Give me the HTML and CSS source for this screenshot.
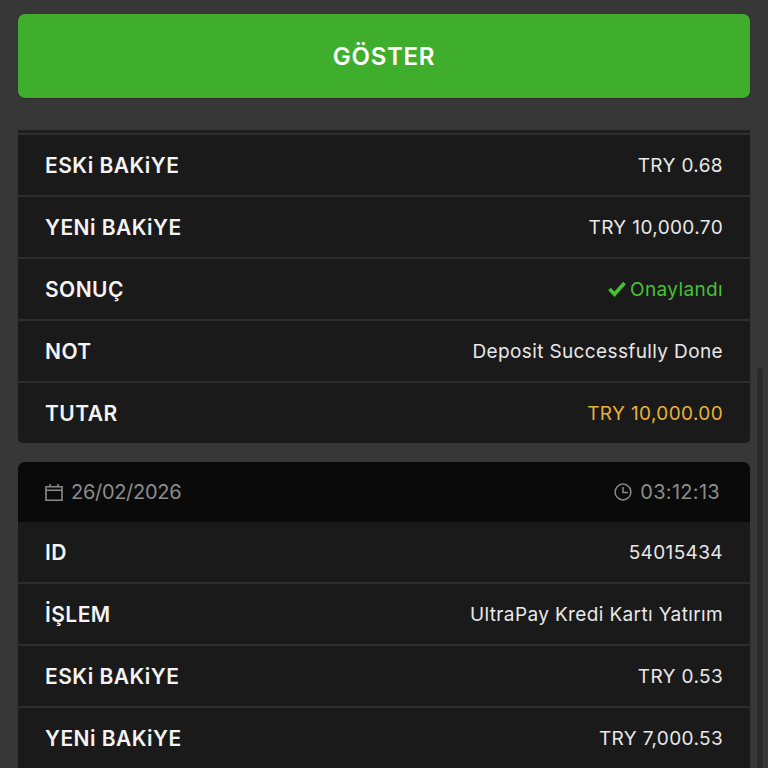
FILE: index.html
```html
<!DOCTYPE html>
<html lang="tr">
<head>
<meta charset="utf-8">
<title>Hesap Geçmişi</title>
<link rel="stylesheet" href="styles.css">
</head>
<body>
<div class="scrollbar"></div>
<main class="page">
  <button class="show-btn">GÖSTER</button>
  <section class="card card-first">
    <div class="row"><span class="label">ESKi BAKiYE</span><span class="value">TRY 0.68</span></div>
    <div class="row"><span class="label">YENi BAKiYE</span><span class="value">TRY 10,000.70</span></div>
    <div class="row"><span class="label">SONUÇ</span><span class="value ok"><svg class="check" viewBox="0 0 18 16" width="18" height="16"><path d="M1.5 8 6.5 13.3 16.5 2" fill="none" stroke="#45c234" stroke-width="3.6"/></svg>Onaylandı</span></div>
    <div class="row"><span class="label">NOT</span><span class="value">Deposit Successfully Done</span></div>
    <div class="row"><span class="label">TUTAR</span><span class="value amount">TRY 10,000.00</span></div>
  </section>
  <section class="card">
    <header class="card-head">
      <span class="stamp stamp-date"><svg viewBox="0 0 18 18" width="18" height="18"><path d="M1 3.8h16v13.4H1zM1 7.3h16M5 1v3.5M13 1v3.5" fill="none" stroke="#8a8a8a" stroke-width="1.6"/></svg>26/02/2026</span>
      <span class="stamp stamp-time"><svg viewBox="0 0 18 18" width="18" height="18"><circle cx="9" cy="9" r="7.9" fill="none" stroke="#8a8a8a" stroke-width="1.5"/><path d="M9 4V9.5H14" fill="none" stroke="#8a8a8a" stroke-width="1.5"/></svg>03:12:13</span>
    </header>
    <div class="row"><span class="label">ID</span><span class="value">54015434</span></div>
    <div class="row"><span class="label">İŞLEM</span><span class="value">UltraPay Kredi Kartı Yatırım</span></div>
    <div class="row"><span class="label">ESKi BAKiYE</span><span class="value">TRY 0.53</span></div>
    <div class="row"><span class="label">YENi BAKiYE</span><span class="value">TRY 7,000.53</span></div>
  </section>
</main>
</body>
</html>
```

FILE: styles.css
```css
* { box-sizing: border-box; }
html, body { margin: 0; height: 768px; overflow: hidden; background: #373737; }
body { font-family: Inter, "Liberation Sans", sans-serif; color: #f2f2f2; position: relative; }
.page { padding: 14px 18px 0; display: flex; flex-direction: column; }
.show-btn {
  display: block; width: 100%; height: 84px; border: 0; border-radius: 7px;
  background: #3eae2c; color: #fff; font: 600 24px Inter, "Liberation Sans", sans-serif;
  letter-spacing: .7px; box-shadow: 0 1px 1px rgba(0,0,0,.25);
}
.card { border-radius: 5px; overflow: hidden; background: #2f2f2f; }
.card-first { margin-top: 32px; border-radius: 0 0 5px 5px; border-top: 3px solid #1f1f1f; padding-top: 2px; height: 313px; }
.card + .card { margin-top: 19px; border-radius: 7px 7px 0 0; }
.row {
  height: 62px; padding: 0 27px; display: flex; align-items: center; justify-content: space-between;
  background: #1a1a1a; border-bottom: 2px solid #2e2e2e;
}
.card-first .row:last-child { border-bottom: 0; height: 60px; }
.label { font-size: 21px; font-weight: 600; color: #f4f4f4; letter-spacing: .45px; }
.value { font-size: 19px; font-weight: 400; color: #e8e8e8; letter-spacing: .37px; display: flex; align-items: center; }
.ok { color: #45c234; }
.check { margin-right: 4px; }
.amount { color: #e8b139; }
.card-head {
  height: 60px; padding: 0 27px; display: flex; align-items: center; justify-content: space-between;
  background: #0a0a0a; color: #8c8c8c; font-size: 20px;
}
.stamp { display: flex; align-items: center; gap: 8px; }
.stamp-date { letter-spacing: -.3px; }
.stamp-time { margin-right: 3px; letter-spacing: .3px; }
.scrollbar { position: absolute; left: 757px; top: 368px; width: 6px; height: 400px; border-radius: 3px 3px 0 0; background: #2b2b2b; }
```
